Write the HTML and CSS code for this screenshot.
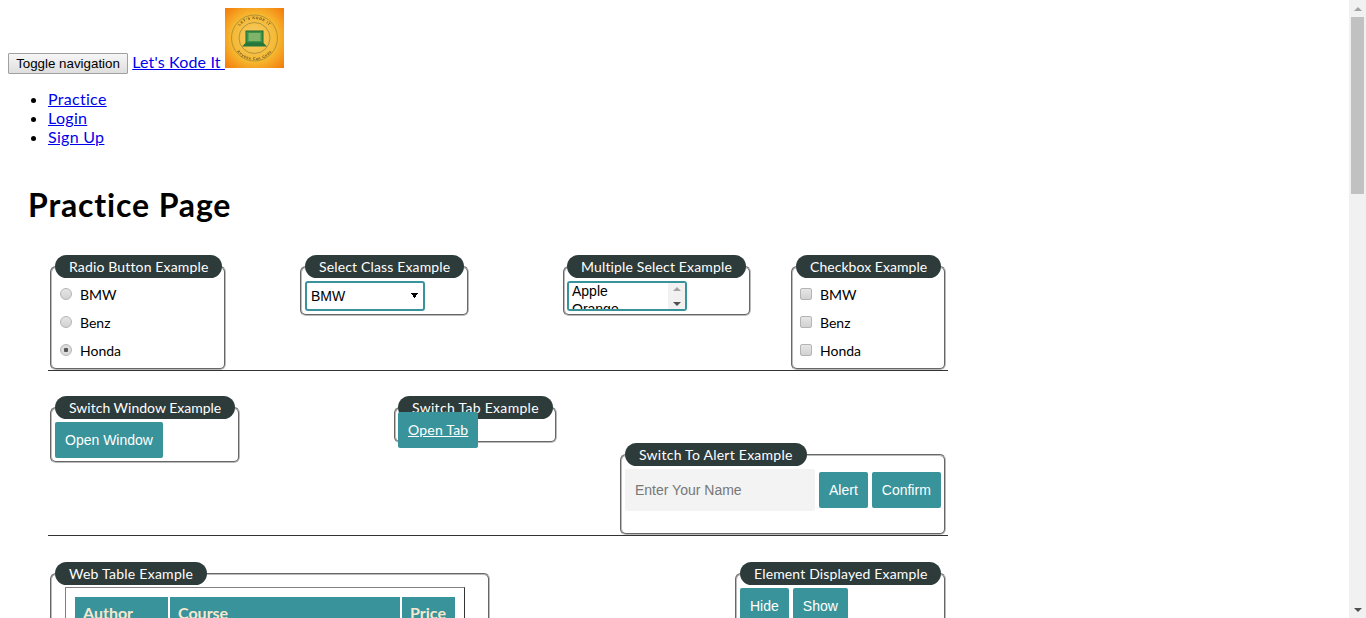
FILE: index.html
```html
<!DOCTYPE html>
<html lang="en">
<head>
	<meta charset="UTF-8">
	<title>Practice Page</title>
	<link rel="stylesheet" href="styles.css">
</head>
<body>
	<div id="page">
		<nav id="topnav">
			<button class="toggle" type="button">Toggle navigation</button>
			<a href="#">Let's Kode It <svg class="logo" width="59" height="60" viewBox="0 0 59 60">
				<defs>
					<radialGradient id="sun" cx="50%" cy="50%" r="68%">
						<stop offset="0" stop-color="#f4cf6c"/>
						<stop offset="0.6" stop-color="#f6b62e"/>
						<stop offset="1" stop-color="#f47d0c"/>
					</radialGradient>
					<path id="arcTop" d="M10.500 30a19 19 0 0 1 38 0"/>
					<path id="arcBottom" d="M7.500 30a22 22 0 0 0 44 0"/>
				</defs>
				<rect width="59" height="60" fill="url(#sun)"/>
				<g class="logo-art">
					<circle cx="29.500" cy="30" r="23" fill="none" stroke="#a08a38" stroke-width="0.800"/>
					<circle cx="29.500" cy="30" r="15.500" fill="none" stroke="#a08a38" stroke-width="0.800"/>
					<text class="logo-text"><textPath href="#arcTop" startOffset="50%" text-anchor="middle">LET'S KODE IT</textPath></text>
					<text class="logo-text"><textPath href="#arcBottom" startOffset="50%" text-anchor="middle">Anyone Can Code</textPath></text>
					<rect x="21" y="23" width="17" height="12" fill="#3c9448" stroke="#1f6b33"/>
					<rect x="23.500" y="25" width="12" height="8" fill="#7fb46a"/>
					<path d="M17 38.500l3.500-3.500h18l3.500 3.500z" fill="#23773a"/>
				</g>
			</svg></a>
		</nav>
		<ul class="menu">
			<li><a href="#">Practice</a></li>
			<li><a href="#">Login</a></li>
			<li><a href="#">Sign Up</a></li>
		</ul>
		<h1>Practice Page</h1>
		<div id="content">
			<div class="row row-one">
				<fieldset class="box w-radio">
					<legend>Radio Button Example</legend>
					<label class="opt"><input type="radio" name="cars"><span>BMW</span></label>
					<label class="opt"><input type="radio" name="cars"><span>Benz</span></label>
					<label class="opt"><input type="radio" name="cars" checked><span>Honda</span></label>
				</fieldset>
				<fieldset class="box w-select">
					<legend>Select Class Example</legend>
					<select class="pick">
						<option>BMW</option>
						<option>Benz</option>
						<option>Honda</option>
					</select>
				</fieldset>
				<fieldset class="box w-multi">
					<legend>Multiple Select Example</legend>
					<div class="multi">
						<select class="multi-list" multiple>
							<option>Apple</option>
							<option>Orange</option>
							<option>Peach</option>
						</select>
						<div class="mini-bar"><i class="up"></i><i class="down"></i></div>
					</div>
				</fieldset>
				<fieldset class="box w-check">
					<legend>Checkbox Example</legend>
					<label class="opt"><input type="checkbox"><span>BMW</span></label>
					<label class="opt"><input type="checkbox"><span>Benz</span></label>
					<label class="opt"><input type="checkbox"><span>Honda</span></label>
				</fieldset>
			</div>
			<div class="row row-two">
				<fieldset class="box w-window">
					<legend>Switch Window Example</legend>
					<button class="btn" type="button">Open Window</button>
				</fieldset>
				<fieldset class="box w-tab">
					<legend>Switch Tab Example</legend>
					<a class="tab-link" href="#">Open Tab</a>
				</fieldset>
				<fieldset class="box w-alert">
					<legend>Switch To Alert Example</legend>
					<div class="alert-line">
						<input class="name" type="text" placeholder="Enter Your Name">
						<button class="btn" type="button">Alert</button>
						<button class="btn" type="button">Confirm</button>
					</div>
				</fieldset>
			</div>
			<div class="row row-three">
				<fieldset class="box w-table">
					<legend>Web Table Example</legend>
					<table class="courses">
						<tr>
							<th class="c-author">Author</th>
							<th class="c-course">Course</th>
							<th class="c-price">Price</th>
						</tr>
					</table>
				</fieldset>
				<fieldset class="box w-shown">
					<legend>Element Displayed Example</legend>
					<div class="shown-line">
						<button class="btn" type="button">Hide</button>
						<button class="btn" type="button">Show</button>
					</div>
				</fieldset>
			</div>
		</div>
	</div>
	<div id="scrollbar">
		<div class="arrow"><i class="up"></i></div>
		<div class="thumb"></div>
		<div class="track"></div>
		<div class="arrow"><i class="down"></i></div>
	</div>
</body>
</html>
```

FILE: styles.css
```css
html, body{ height: 100%; margin: 0; overflow: hidden;}
body{ display: flex; background: #fff; color: #000; font-family: "Lato", "Liberation Sans", sans-serif; font-size: 16px; letter-spacing: 0.3px;}
a{ color: #00e;}

#page{ flex: 1; min-width: 0; height: 618px; padding: 8px; box-sizing: border-box; overflow: hidden;}
#topnav{ line-height: 19px; letter-spacing: 0.15px;}
.toggle{ height: 21px; width: 120px; padding: 0; border: 1px solid #a0a0a0; border-radius: 1px; background: linear-gradient(#f6f6f6, #dedede); color: #000; font: 13.33px "Liberation Sans", sans-serif; letter-spacing: 0;}
.logo{ vertical-align: baseline;}
.logo-art{ filter: blur(0.3px);}
.logo-text{ font: bold 3.600px "Liberation Sans", sans-serif; letter-spacing: 0.600px; fill: #5d4c1c;}

.menu{ margin: 15px 0 0; padding-left: 40px; line-height: 19px;}

h1{ margin: 40px 0 0 20px; font-size: 32px; line-height: 37px; font-weight: 700; letter-spacing: 0.85px;}

#content{ width: 900px; margin: 32px 0 0 40px;}
.row{ display: flex; align-items: flex-start; padding-left: 2px; border-bottom: 1px solid #333;}
.row-one{ height: 115px;}
.row-two{ height: 139px; margin-top: 25px;}
.row-three{ margin-top: 26px; border-bottom: 0;}

.box{ min-width: 0; margin: 0; padding: 3px; border: 2px groove #bbb; border-radius: 6px; box-sizing: border-box;}
.box legend{ height: 23px; padding: 0 14px; box-sizing: border-box; border-radius: 12px; background: #2d3b3b; color: #fff; font-size: 14px; line-height: 23px; letter-spacing: 0.15px; white-space: nowrap;}

.w-radio{ width: 176px; height: 115px;}
.w-select{ width: 169px; margin-left: 74px;}
.w-multi{ width: 188px; margin-left: 94px;}
.w-multi legend{ margin-left: -1px;}
.w-check{ width: 155px; height: 115px; margin-left: 40px;}
.w-check legend{ letter-spacing: 0.05px;}
.w-window{ width: 190px;}
.w-window legend{ letter-spacing: 0;}
.w-tab{ width: 163px; margin-left: 154px; padding-top: 1px; line-height: 17px;}
.w-tab legend{ margin-left: -1px; letter-spacing: 0.3px;}
.w-alert{ width: 326px; height: 92px; margin: 47px 0 0 63px;}
.w-alert legend{ letter-spacing: 0.25px;}
.w-table{ width: 440px; height: 100px;}
.w-table legend{ letter-spacing: 0.25px;}
.w-shown{ width: 211px; height: 100px; margin-left: 245px;}

.opt{ display: flex; align-items: center; height: 28px; padding-left: 5px; font-size: 14px; letter-spacing: 0;}
.opt span{ margin: -2px 0 0 8px;}
.opt input{ width: 12px; height: 12px; margin: -3px 0 0; appearance: none; border: 1px solid #b4b4b4; background: linear-gradient(#e6e6e6, #d2d2d2);}
.opt input[type=radio]{ border-radius: 50%;}
.opt input[type=checkbox]{ border-radius: 2px;}
.opt input:checked{ background: radial-gradient(circle, #555 0, #555 28%, #dcdcdc 36%);}
.w-check .opt{ padding-left: 4px;}

.pick{ display: block; width: 120px; height: 30px; padding: 0 4px; border: 2px solid #39939a; border-radius: 3px; appearance: none; background: linear-gradient(to top right, transparent 50%, #000 50%) 104px 10px / 4px 6px no-repeat, linear-gradient(to top left, transparent 50%, #000 50%) 107px 10px / 4px 6px no-repeat, #fff; color: #000; font: 14px "Liberation Sans", sans-serif; letter-spacing: 0;}

.multi{ display: flex; width: 120px; height: 30px; margin-left: -1px; border: 2px solid #39939a; border-radius: 3px; box-sizing: border-box;}
.multi-list{ flex: 1; min-width: 0; padding: 0 1px; border: 0; outline: 0; overflow: hidden; background: #fff; color: #000; font: 14px "Liberation Sans", sans-serif; letter-spacing: 0;}
.mini-bar{ display: flex; flex-direction: column; align-items: center; justify-content: space-between; flex: none; width: 17px; padding: 4px 0 3px; box-sizing: border-box; background: #f1f1f1;}
.mini-bar i{ width: 0; height: 0; border-left: 4px solid transparent; border-right: 4px solid transparent;}
.mini-bar .up{ border-bottom: 4px solid #a3a3a3;}
.mini-bar .down{ border-top: 4px solid #505050;}

.btn{ height: 36px; padding: 0 10px; border: 0; border-radius: 2px; background: #39939a; color: #fff; font: 14px "Liberation Sans", sans-serif; letter-spacing: 0;}
.tab-link{ margin-left: -1px; padding: 9px 10px 10px; border-radius: 2px; background: #39939a; color: #fff; font-size: 14px; letter-spacing: 0.2px;}

.alert-line{ display: flex; align-items: center; gap: 4px;}
.name{ width: 190px; height: 42px; padding: 0 10px; border: 0; border-radius: 2px; box-sizing: border-box; background: #f3f3f3; font: 14px "Liberation Sans", sans-serif;}
.name::placeholder{ color: #777;}
.shown-line{ display: flex; gap: 4px;}

.courses{ width: 400px; margin: -1px 0 0 10px; padding: 7px; border: 1px solid #808080; border-right-color: #333; border-spacing: 2px; box-sizing: border-box; table-layout: fixed;}
.courses th{ padding: 6px 8px; box-sizing: border-box; background: #39939a; color: #f6e8cf; font-size: 16px; text-align: left; letter-spacing: 0;}
.c-author{ width: 93px;}
.c-course{ width: 230px;}
.c-price{ width: 53px;}

#scrollbar{ display: flex; flex-direction: column; flex: none; width: 17px; height: 618px; background: #f1f1f1;}
.arrow{ display: flex; align-items: center; justify-content: center; flex: none; height: 17px;}
.arrow i{ width: 0; height: 0; border-left: 4px solid transparent; border-right: 4px solid transparent;}
.arrow .up{ border-bottom: 4px solid #a3a3a3;}
.arrow .down{ border-top: 4px solid #505050;}
.thumb{ flex: none; height: 177px; margin: 0 2px; background: #c1c1c1;}
.track{ flex: 1;}
```
